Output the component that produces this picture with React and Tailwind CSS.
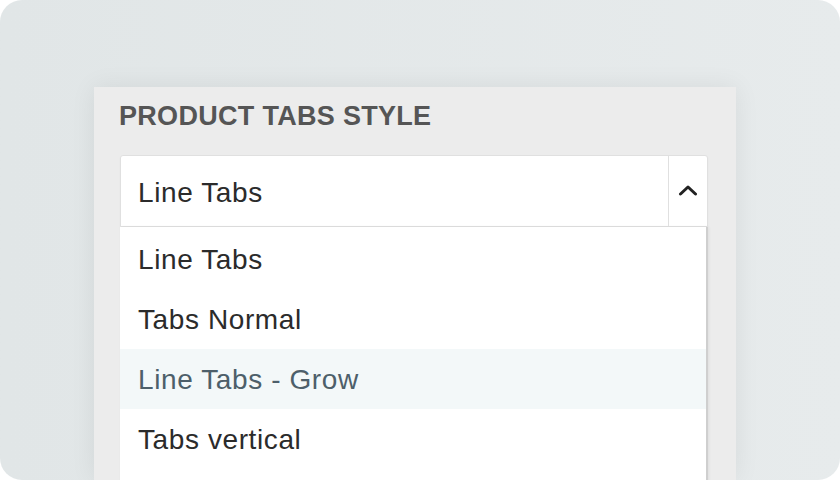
import React from "react";

const options = ["Line Tabs", "Tabs Normal", "Line Tabs - Grow", "Tabs vertical"];

const ChevronUp = () => (
  <svg width="20" height="12" viewBox="0 0 20 12" fill="none">
    <path d="M2.5 10L10 3L17.5 10" stroke="#222" strokeWidth="3" strokeLinecap="round" strokeLinejoin="round" />
  </svg>
);

export default function App() {
  return (
    <div className="w-[840px] h-[480px] bg-white font-['Liberation_Sans',Arial,sans-serif]">
      <div className="w-full h-full rounded-[22px] overflow-hidden bg-gradient-to-r from-[#e1e6e7] to-[#e7ebec] pt-[87px] pl-[94px]">
        <div className="w-[642px] h-[393px] bg-[#ececec] shadow-[0_0_24px_rgba(0,0,0,0.07)] pt-[13px] px-[25px]">
          {/* Label */}
          <h2 className="text-[27px] leading-[32px] font-bold text-[#555555] tracking-[0.3px]">
            PRODUCT TABS STYLE
          </h2>

          {/* Select */}
          <div className="mt-[23px] ml-px w-[588px]">
            <div className="flex h-[72px] bg-white border border-[#e0e0e0] rounded-t-[3px] shadow-[0_1px_2px_rgba(0,0,0,0.04)]">
              <div className="flex-1 flex items-center pl-[17px] pt-[4px] text-[28px] tracking-[0.6px] text-[#2b2b2b]">
                Line Tabs
              </div>
              <div className="w-[39px] border-l border-[#e0e0e0] flex items-center justify-center pb-[2px]">
                <ChevronUp />
              </div>
            </div>

            {/* Options list */}
            <div className="bg-white pt-[2px] h-[260px] border-r-2 border-[#cfcfcf] shadow-[1px_0_3px_rgba(0,0,0,0.06)]">
              {options.map((opt, i) => (
                <div
                  key={opt}
                  className={
                    i === 2
                      ? "h-[60px] flex items-center pl-[18px] pt-[2px] text-[28px] tracking-[0.6px] bg-[#f3f8f9] text-[#4d5f6a]"
                      : "h-[60px] flex items-center pl-[18px] pt-[2px] text-[28px] tracking-[0.6px] text-[#2b2b2b]"
                  }
                >
                  {opt}
                </div>
              ))}
            </div>
          </div>
        </div>
      </div>
    </div>
  );
}
